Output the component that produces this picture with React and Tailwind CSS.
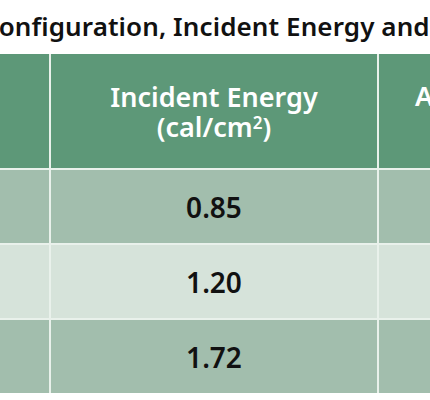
export default function App() {
  const rows = [
    { value: "0.85", bg: "bg-[#a2bead]" },
    { value: "1.20", bg: "bg-[#d6e3da]" },
    { value: "1.72", bg: "bg-[#a2bead]" },
  ];

  return (
    <div className="w-[430px] h-[400px] overflow-hidden bg-white" style={{ fontFamily: '"Noto Sans", sans-serif' }}>
      {/* Title runs past both edges */}
      <div className="h-[54px] pt-[9px] -ml-[18px] whitespace-nowrap text-[26px] leading-[34px] font-semibold text-[#111] tracking-[0.1px]">
        Configuration, Incident Energy and PPE Category
      </div>

      <div className="grid grid-cols-[49px_326px_200px] grid-rows-[114px_73px_73px_73px] gap-[2px] bg-[#e9f1eb] w-[579px]">
        <div className="bg-[#5d9878]"></div>
        <div className="bg-[#5d9878] flex flex-col items-center justify-center pt-[2px] text-white font-semibold text-[27px] leading-[30px] text-center">
          <span>Incident Energy</span>
          <span>
            (cal/cm<sup className="text-[17px]">2</sup>)
          </span>
        </div>
        <div className="bg-[#5d9878] flex items-center pl-[36px] pb-[30px] text-white font-semibold text-[27px] leading-[30px] whitespace-nowrap">
          Arc Flash
        </div>

        {rows.map((r) => (
          <>
            <div key={r.value + "a"} className={r.bg}></div>
            <div key={r.value + "b"} className={`${r.bg} flex items-center justify-center text-[28px] font-semibold text-[#111]`}>
              {r.value}
            </div>
            <div key={r.value + "c"} className={r.bg}></div>
          </>
        ))}
      </div>
    </div>
  );
}
